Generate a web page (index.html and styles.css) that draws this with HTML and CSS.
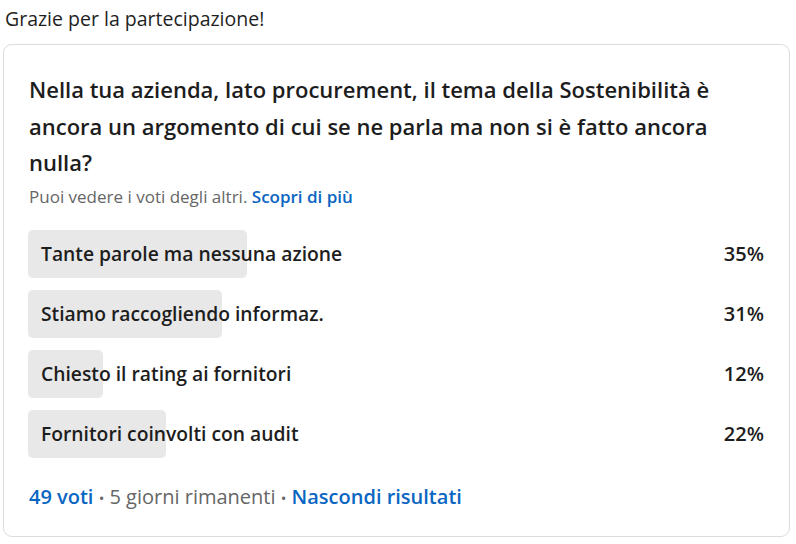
FILE: index.html
```html
<!DOCTYPE html>
<html lang="it">
<head>
    <meta charset="UTF-8">
    <title>Sondaggio</title>
    <link rel="stylesheet" href="styles.css">
</head>
<body>
    <p class="thanks">Grazie per la partecipazione!</p>
    <div class="poll">
        <h2 class="question">Nella tua azienda, lato procurement, il tema della Sostenibilità è ancora un argomento di cui se ne parla ma non si è fatto ancora nulla?</h2>
        <p class="note">Puoi vedere i voti degli altri. <a href="#" class="link">Scopri di più</a></p>

        <div class="options">
            <div class="option">
                <div class="track">
                    <div class="fill" style="width: 35%"></div>
                    <span class="label">Tante parole ma nessuna azione</span>
                </div>
                <span class="pct">35%</span>
            </div>
            <div class="option">
                <div class="track">
                    <div class="fill" style="width: 31%"></div>
                    <span class="label">Stiamo raccogliendo informaz.</span>
                </div>
                <span class="pct">31%</span>
            </div>
            <div class="option">
                <div class="track">
                    <div class="fill" style="width: 12%"></div>
                    <span class="label">Chiesto il rating ai fornitori</span>
                </div>
                <span class="pct">12%</span>
            </div>
            <div class="option">
                <div class="track">
                    <div class="fill" style="width: 22%"></div>
                    <span class="label">Fornitori coinvolti con audit</span>
                </div>
                <span class="pct">22%</span>
            </div>
        </div>

        <p class="footer">
            <a href="#" class="link">49 voti</a>
            <span class="dot">•</span> 5 giorni rimanenti <span class="dot">•</span>
            <a href="#" class="link">Nascondi risultati</a>
        </p>
    </div>
</body>
</html>
```

FILE: styles.css
```css
body, h2, p {
    margin: 0;
    padding: 0;
}

body {
    font-family: "Open Sans", "Noto Sans", sans-serif;
    background-color: #ffffff;
    color: #1d1d1d;
    width: 796px;
}

.thanks {
    padding: 6px 0 0 5px;
    font-size: 19.5px;
    line-height: 26px;
    color: #1f1f1f;
}

.poll {
    margin: 12px 6px 0 3px;
    padding: 26px 25px 25px 24px;
    border: 1px solid #dcdcdc;
    border-radius: 9px;
}

.question {
    font-size: 22px;
    font-weight: 600;
    line-height: 36.5px;
    color: #1d1d1d;
    padding: 0 30px 0 1px;
}

.note {
    margin-top: 5px;
    padding-left: 1px;
    font-size: 17px;
    line-height: 22px;
    color: #666666;
}

.link {
    color: #0a66c2;
    font-weight: 600;
    text-decoration: none;
}

.options {
    margin-top: 22px;
    display: flex;
    flex-direction: column;
    gap: 12px;
}

.option {
    display: flex;
    align-items: center;
}

.track {
    position: relative;
    flex: 1;
    height: 48px;
    display: flex;
    align-items: center;
}

.fill {
    position: absolute;
    left: 0;
    top: 0;
    bottom: 0;
    background-color: #e8e8e8;
    border-radius: 5px;
}

.label {
    position: relative;
    padding-left: 13px;
    font-size: 19.3px;
    font-weight: 600;
    color: #1d1d1d;
}

.pct {
    width: 110px;
    text-align: right;
    font-size: 20px;
    font-weight: 600;
    color: #1d1d1d;
}

.footer {
    margin-top: 26px;
    padding-left: 1px;
    font-size: 20px;
    line-height: 26px;
    color: #666666;
}

.dot {
    font-size: 15px;
}
```
